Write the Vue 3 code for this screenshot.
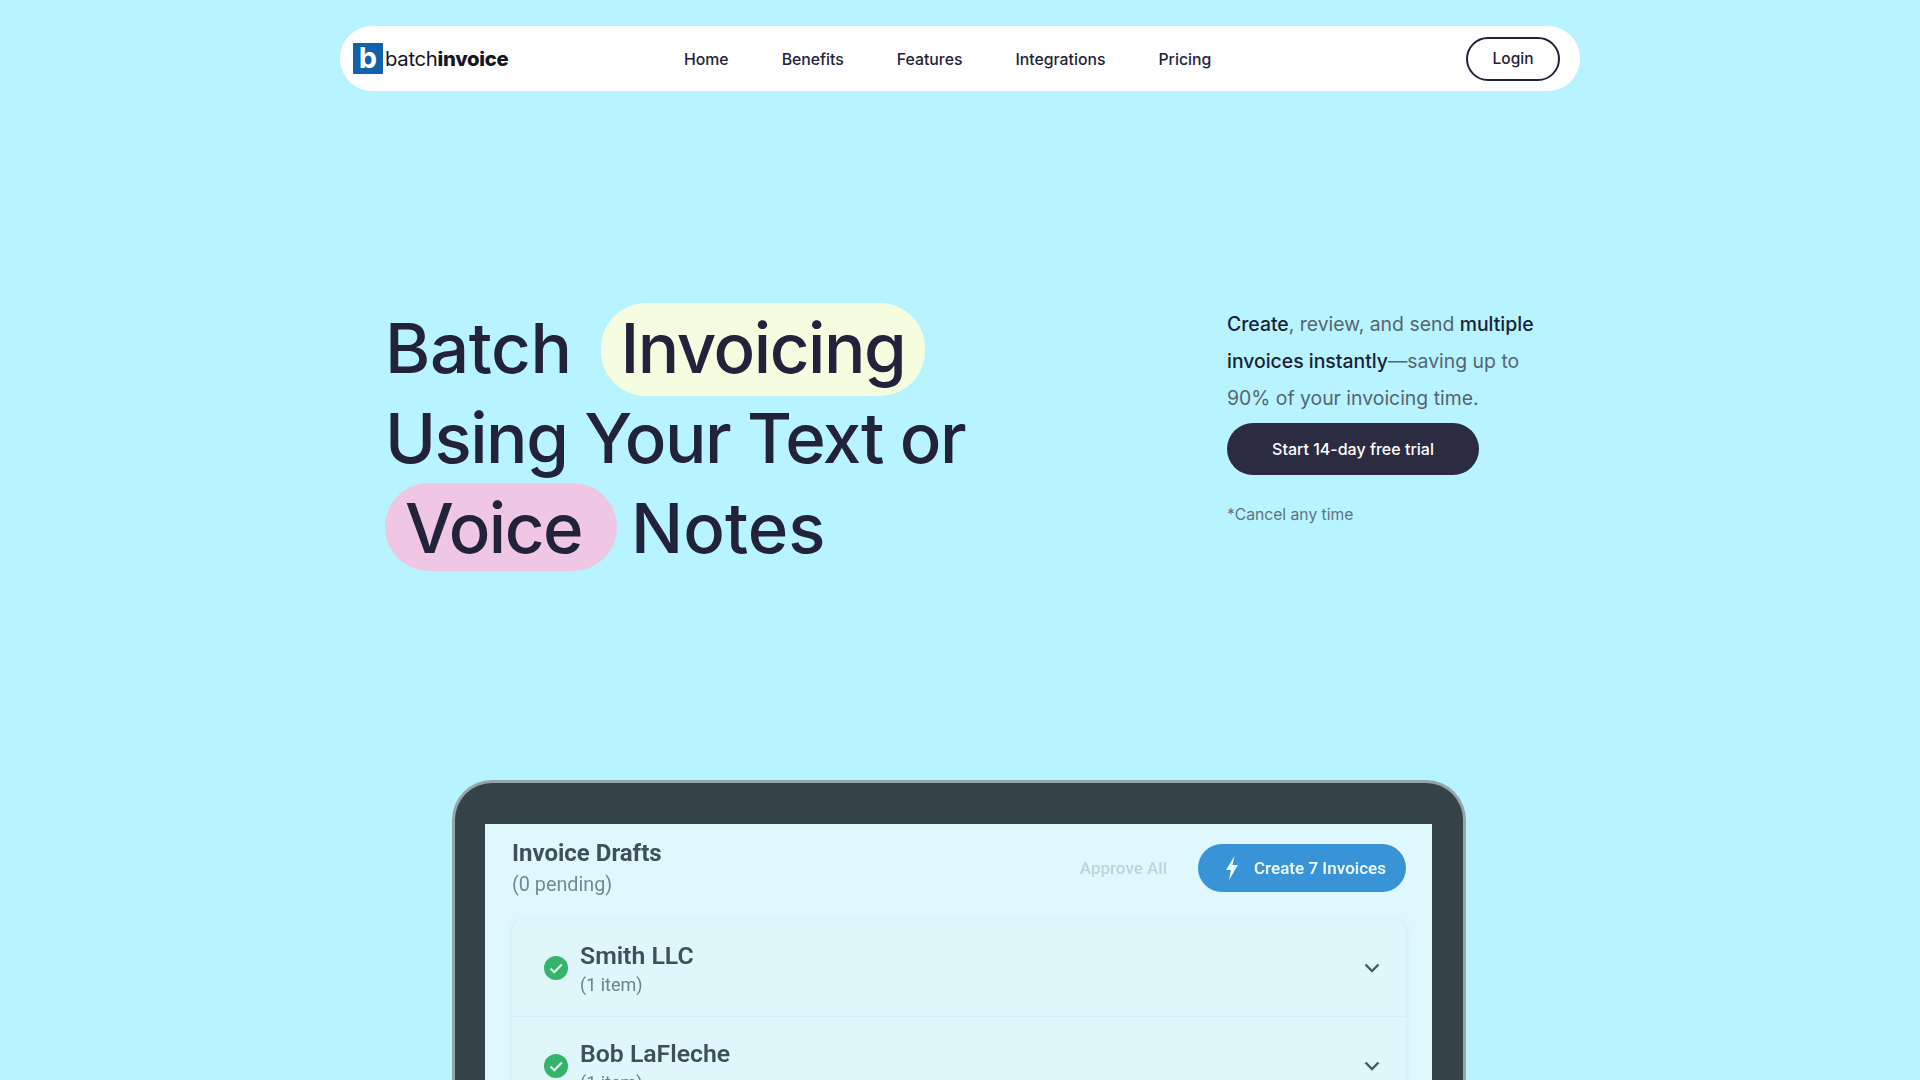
<template>
  <div class="page">
    <nav class="navbar">
      <a class="brand">
        <span class="brand-mark">b</span>
        <span class="brand-name">batch<b>invoice</b></span>
      </a>
      <ul class="nav-links">
        <li v-for="link in links" :key="link">{{ link }}</li>
      </ul>
      <button class="btn-login">Login</button>
    </nav>

    <section class="hero">
      <h1 class="hero-title">
        <span class="line"><span class="wide">Batch</span> <span class="pill pill-yellow">Invoicing</span></span>
        <span class="line">Using Your Text or</span>
        <span class="line"><span class="pill pill-pink">Voice</span> <span class="notes">Notes</span></span>
      </h1>
      <div class="hero-side">
        <p class="hero-text">
          <strong>Create</strong>, review, and send <strong>multiple invoices instantly</strong>—saving up to 90% of your invoicing time.
        </p>
        <button class="btn-trial">Start 14-day free trial</button>
        <p class="cancel-note">*Cancel any time</p>
      </div>
    </section>

    <section class="device">
      <div class="screen">
        <div class="drafts-head">
          <div class="drafts-heading">
            <h2 class="drafts-title">Invoice Drafts</h2>
            <div class="drafts-sub">(0 pending)</div>
          </div>
          <div class="drafts-actions">
            <span class="approve-all">Approve All</span>
            <button class="btn-create">
              <svg width="16" height="26" viewBox="0 0 16 26"><path d="M10.500 1 2 15h5l-2 10 9-15H8.500z" fill="#f0f9fe" /></svg>
              Create 7 Invoices
            </button>
          </div>
        </div>
        <div class="drafts-card">
          <div v-for="row in drafts" :key="row.name" class="draft-row">
            <svg class="check" width="24" height="24" viewBox="0 0 24 24">
              <circle cx="12" cy="12" r="12" fill="#34b36b" />
              <path d="M6.500 12.500l3.800 3.800 7.500-7.800" fill="none" stroke="#e6f7ef" stroke-width="2.200" />
            </svg>
            <div class="draft-info">
              <div class="draft-name">{{ row.name }}</div>
              <div class="draft-items">{{ row.items }}</div>
            </div>
            <svg class="chevron" width="16" height="10" viewBox="0 0 16 10">
              <path d="M1.500 1.500 8 8l6.500-6.500" fill="none" stroke="#4a5a60" stroke-width="2.400" />
            </svg>
          </div>
        </div>
      </div>
    </section>
  </div>
</template>

<script setup>
const links = ['Home', 'Benefits', 'Features', 'Integrations', 'Pricing']

const drafts = [
  { name: 'Smith LLC', items: '(1 item)' },
  { name: 'Bob LaFleche', items: '(1 item)' },
]
</script>

<style>
html, body {
  margin: 0;
  background: #b7f4ff;
}
</style>

<style scoped>
.page {
  height: 1080px;
  overflow: hidden;
  background: #b7f4ff;
  padding-top: 26px;
  box-sizing: border-box;
  font-family: Inter, "Liberation Sans", sans-serif;
  color: #22233b;
}

.navbar {
  width: 1240px;
  height: 65px;
  margin-left: 340px;
  padding: 0 20px 0 13px;
  box-sizing: border-box;
  display: flex;
  align-items: center;
  background: #fff;
  border-radius: 32px;
}

.brand {
  display: flex;
  align-items: center;
  gap: 2px;
  width: 331px;
}

.brand-mark {
  width: 30px;
  height: 31px;
  background: #1162ab;
  color: #fff;
  font-family: Inter, sans-serif;
  font-weight: 700;
  font-size: 29px;
  line-height: 30px;
  text-align: center;
  border-radius: 1px;
}

.brand-name {
  font-family: Inter, sans-serif;
  font-size: 20.300px;
  color: #15151f;
  letter-spacing: -0.300px;
}

.brand-name b {
  font-weight: 800;
}

.nav-links {
  list-style: none;
  display: flex;
  gap: 53px;
  margin: 1px 0 0;
  padding: 0;
  flex: 1;
  font-size: 15.800px;
  font-weight: 450;
}

.btn-login {
  width: 94px;
  height: 44px;
  border: 2px solid #22233b;
  border-radius: 22px;
  background: #fff;
  color: #22233b;
  font: 500 15.500px Inter, sans-serif;
}

.hero {
  display: flex;
  margin-top: 212px;
  padding-left: 385px;
}

.hero-title {
  width: 842px;
  margin: 0;
  font-size: 69px;
  font-weight: 500;
  letter-spacing: -1.500px;
  line-height: 90px;
}

.line {
  display: block;
  height: 90px;
  white-space: nowrap;
}

.wide {
  letter-spacing: -0.400px;
}

.notes {
  letter-spacing: 0;
}

.pill {
  display: inline-block;
  padding: 0 20px;
  line-height: 90px;
  border-radius: 45px;
}

.pill-yellow {
  background: #f4fde0;
  margin-left: 12px;
  padding-bottom: 3px;
}

.pill-pink {
  background: #efc6e4;
  padding-right: 35px;
  margin-right: -3px;
  height: 88px;
}

.hero-side {
  width: 320px;
  padding-top: 3px;
}

.hero-text {
  margin: 0;
  font-size: 19.400px;
  line-height: 37px;
  color: #56646f;
}

.hero-text strong {
  font-weight: 500;
  color: #1a2238;
}

.btn-trial {
  display: block;
  width: 252px;
  height: 52px;
  margin-top: 6px;
  border: 0;
  border-radius: 26px;
  background: #2b2c42;
  color: #fff;
  font: 500 16px Inter, sans-serif;
}

.cancel-note {
  margin: 30px 0 0;
  font-size: 15.700px;
  color: #5f7280;
}

.device {
  width: 1014px;
  height: 400px;
  margin-top: 207px;
  margin-left: 452px;
  padding: 41px 31px 0 30px;
  box-sizing: border-box;
  background: #354247;
  border: 3px solid #93a6aa;
  border-bottom: 0;
  border-radius: 40px 40px 0 0;
  font-family: Roboto, sans-serif;
}

.screen {
  height: 100%;
  padding: 20px 26px 0 27px;
  box-sizing: border-box;
  background: #dff8fe;
  filter: blur(0.4px);
}

.drafts-head {
  display: flex;
  justify-content: space-between;
  align-items: flex-start;
}

.drafts-heading {
  margin-top: -6px;
}

.drafts-title {
  margin: 0;
  font-size: 24px;
  font-weight: 700;
  color: #3f5058;
  line-height: 30px;
}

.drafts-sub {
  margin-top: 5px;
  font-size: 19.800px;
  color: #76888f;
}

.drafts-actions {
  display: flex;
  align-items: center;
  gap: 31px;
}

.approve-all {
  font-size: 17px;
  font-weight: 500;
  color: #c0d2d8;
}

.btn-create {
  display: flex;
  align-items: center;
  gap: 14px;
  width: 208px;
  height: 48px;
  padding: 0 0 0 26px;
  border: 0;
  border-radius: 24px;
  background: #3894d6;
  color: #e8f6fd;
  font: 600 17px Roboto, sans-serif;
}

.drafts-card {
  margin-top: 23px;
  background: #dff6fb;
  border-radius: 12px 12px 0 0;
  box-shadow: 0 1px 4px rgba(100, 150, 165, 0.2);
}

.draft-row {
  display: flex;
  align-items: center;
  height: 97px;
  padding: 0 26px 0 32px;
  border-bottom: 1px solid #d5eff5;
}

.draft-info {
  flex: 1;
  margin-left: 12px;
}

.draft-name {
  font-size: 24.800px;
  font-weight: 600;
  color: #3f5058;
  line-height: 30px;
}

.draft-items {
  margin-top: 3px;
  font-size: 18px;
  color: #6e8188;
}
</style>
